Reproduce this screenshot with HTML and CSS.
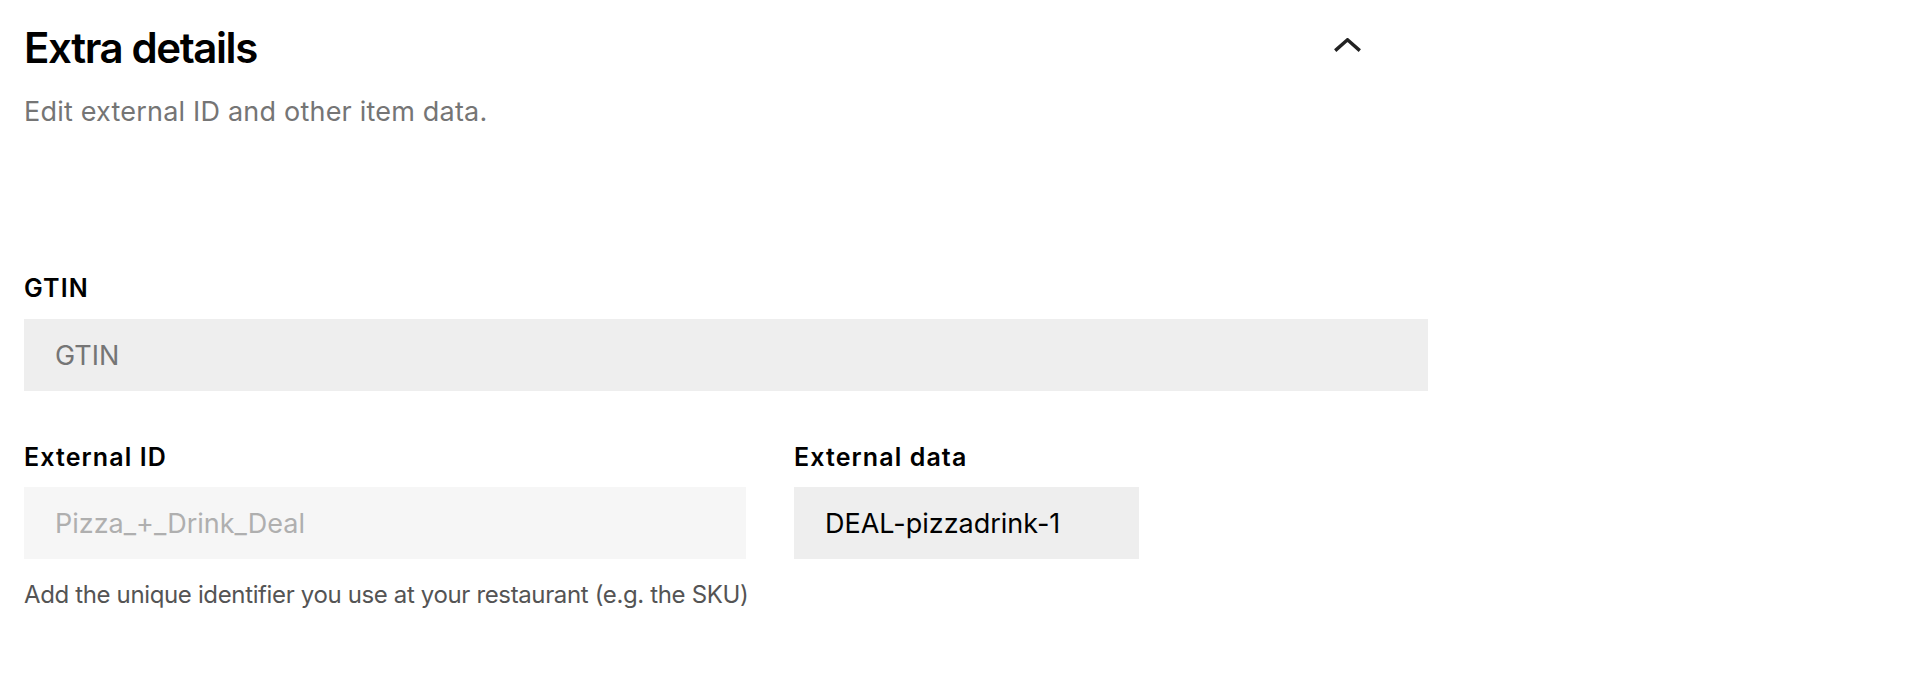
FILE: index.html
```html
<!DOCTYPE html>
<html lang="en">
<head>
<meta charset="utf-8">
<title>Extra details</title>
<link rel="stylesheet" href="styles.css">
</head>
<body>
<section class="panel">
  <header class="panel-head">
    <h2 class="panel-title">Extra details</h2>
    <button class="collapse-btn" type="button" aria-label="Collapse">
      <svg width="27" height="14" viewBox="0 0 27 14" aria-hidden="true">
        <path d="M1.2 12.6 L13.5 1.8 L25.8 12.6" fill="none" stroke="#222" stroke-width="3.4"/>
      </svg>
    </button>
  </header>
  <p class="panel-desc">Edit external ID and other item data.</p>

  <div class="field field-gtin">
    <label class="field-label" for="gtin">GTIN</label>
    <input class="field-input" id="gtin" type="text" placeholder="GTIN">
  </div>

  <div class="field-row">
    <div class="field field-extid">
      <label class="field-label" for="extid">External ID</label>
      <input class="field-input is-disabled" id="extid" type="text" placeholder="Pizza_+_Drink_Deal" disabled>
      <p class="field-help">Add the unique identifier you use at your restaurant (e.g. the SKU)</p>
    </div>
    <div class="field field-extdata">
      <label class="field-label" for="extdata">External data</label>
      <input class="field-input" id="extdata" type="text" value="DEAL-pizzadrink-1">
    </div>
  </div>
</section>
</body>
</html>
```

FILE: styles.css
```css
* { box-sizing: border-box; }

html, body {
  margin: 0;
  padding: 0;
  background: #ffffff;
}

body {
  font-family: Inter, Roboto, "Liberation Sans", Arial, sans-serif;
  color: #000000;
}

.panel {
  width: 1428px;
  padding: 22px 0 0 24px;
}

.panel-head {
  display: flex;
  justify-content: space-between;
  align-items: flex-start;
}

.panel-title {
  margin: 0;
  font-size: 42px;
  line-height: 52px;
  font-weight: 600;
  letter-spacing: -1.4px;
}

.collapse-btn {
  border: 0;
  background: transparent;
  padding: 0;
  margin: 16px 67px 0 0;
  width: 27px;
  height: 14px;
  display: block;
  cursor: pointer;
}

.collapse-btn svg { display: block; }

.panel-desc {
  margin: 20px 0 0;
  font-size: 27px;
  line-height: 36px;
  color: #757575;
  letter-spacing: 0.2px;
}

.field { display: flex; flex-direction: column; }

.field-gtin { margin-top: 142px; }

.field-label {
  font-size: 25px;
  line-height: 32px;
  font-weight: 600;
  letter-spacing: 1.1px;
  margin-bottom: 15px;
}

.field-input {
  display: block;
  width: 100%;
  height: 72px;
  border: 0;
  outline: none;
  border-radius: 0;
  background: #eeeeee;
  padding: 0 31px;
  font-family: inherit;
  font-size: 27px;
  color: #000000;
}

.field-input::placeholder {
  color: #757575;
  opacity: 1;
}

.field-input.is-disabled {
  background: #f6f6f6;
}

.field-input.is-disabled::placeholder {
  color: #afafaf;
}

.field-row {
  display: flex;
  gap: 48px;
  margin-top: 50px;
}

.field-extid { width: 722px; }
.field-extdata { width: 345px; }

.field-row .field-label { margin-bottom: 14px; }

.field-help {
  margin: 20px 0 0;
  font-size: 24px;
  line-height: 32px;
  color: #545454;
  letter-spacing: -0.36px;
  white-space: nowrap;
}
```
